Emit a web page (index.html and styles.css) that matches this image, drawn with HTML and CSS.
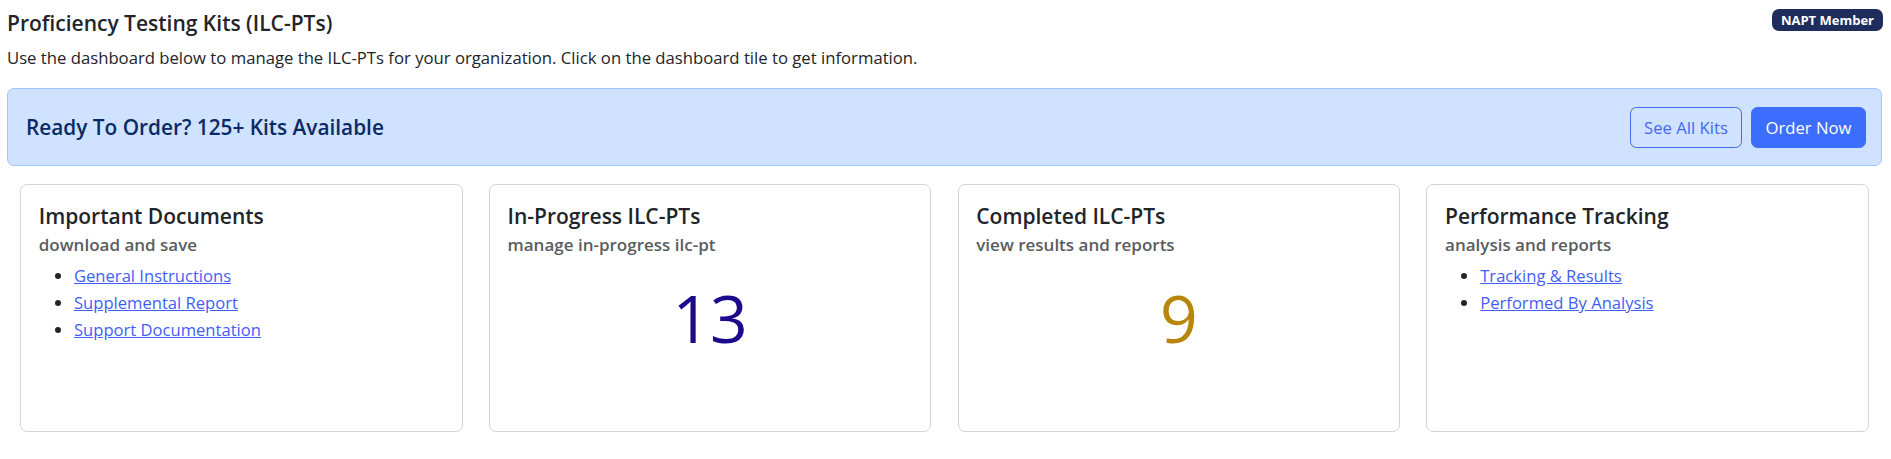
FILE: index.html
```html
<!DOCTYPE html>
<html lang="en">
<head>
<meta charset="utf-8">
<title>Proficiency Testing Kits (ILC-PTs)</title>
<link rel="stylesheet" href="styles.css">
</head>
<body>
<div class="page">
  <header class="page-head">
    <div class="page-intro">
      <h1 class="page-title">Proficiency Testing Kits (ILC-PTs)</h1>
      <p class="page-lead">Use the dashboard below to manage the ILC-PTs for your organization. Click on the dashboard tile to get information.</p>
    </div>
    <span class="member-badge">NAPT Member</span>
  </header>

  <section class="order-banner">
    <h2 class="order-title">Ready To Order? 125+ Kits Available</h2>
    <div class="order-actions">
      <a class="btn btn-outline" href="#">See All Kits</a>
      <a class="btn btn-solid" href="#">Order Now</a>
    </div>
  </section>

  <section class="tiles">
    <div class="tile-col">
      <div class="tile">
        <h3 class="tile-title">Important Documents</h3>
        <h4 class="tile-sub">download and save</h4>
        <ul class="tile-links">
          <li><a href="#">General Instructions</a></li>
          <li><a href="#">Supplemental Report</a></li>
          <li><a href="#">Support Documentation</a></li>
        </ul>
      </div>
    </div>
    <div class="tile-col">
      <div class="tile">
        <h3 class="tile-title">In-Progress ILC-PTs</h3>
        <h4 class="tile-sub">manage in-progress ilc-pt</h4>
        <div class="tile-count count-progress">13</div>
      </div>
    </div>
    <div class="tile-col">
      <div class="tile">
        <h3 class="tile-title">Completed ILC-PTs</h3>
        <h4 class="tile-sub">view results and reports</h4>
        <div class="tile-count count-done">9</div>
      </div>
    </div>
    <div class="tile-col">
      <div class="tile">
        <h3 class="tile-title">Performance Tracking</h3>
        <h4 class="tile-sub">analysis and reports</h4>
        <ul class="tile-links">
          <li><a href="#">Tracking &amp; Results</a></li>
          <li><a href="#">Performed By Analysis</a></li>
        </ul>
      </div>
    </div>
  </section>
</div>
</body>
</html>
```

FILE: styles.css
```css
* { box-sizing: border-box; }

html, body {
  margin: 0;
  padding: 0;
  background: #ffffff;
}

body {
  font-family: "Segoe UI", "Open Sans", "Noto Sans", sans-serif;
  font-size: 16.6px;
  line-height: 1.5;
  color: #212529;
}

.page {
  padding: 9.5px 9px 0 7px;
}

.page-head {
  display: flex;
  justify-content: space-between;
  align-items: flex-start;
}

.page-title {
  margin: 0 0 9.5px 0;
  font-size: 21px;
  font-weight: 600;
  line-height: 26px;
}

.page-lead {
  margin: 0 0 18px 0;
  font-size: 16.7px;
  line-height: 25px;
}

.member-badge {
  display: inline-block;
  margin-top: -0.5px;
  margin-right: -1px;
  background: #1f2d5c;
  color: #ffffff;
  font-size: 13px;
  font-weight: 700;
  line-height: 13px;
  padding: 4.5px 9px;
  border-radius: 7px;
}

.order-banner {
  display: flex;
  align-items: center;
  justify-content: space-between;
  background: #cfe2ff;
  border: 1px solid #9ec5fe;
  border-radius: 7px;
  padding: 17.5px 15px 17.5px 18px;
  margin-bottom: 18px;
}

.order-title {
  margin: 0;
  font-size: 20.8px;
  font-weight: 600;
  line-height: 1.2;
  color: #0a2a66;
}

.order-actions {
  display: flex;
  gap: 8.5px;
}

.btn {
  display: inline-block;
  font-size: 16.7px;
  line-height: 25px;
  padding: 7px 13.5px;
  border-radius: 6.5px;
  border: 1px solid transparent;
  text-decoration: none;
}

.btn-outline {
  color: #4468f0;
  border-color: #4468f0;
}

.btn-solid {
  color: #ffffff;
  background: #3d6dfd;
  border-color: #3d6dfd;
}

.tiles {
  display: grid;
  grid-template-columns: repeat(4, 1fr);
}

.tile-col {
  padding: 0 13.2px;
}

.tile {
  height: 248px;
  border: 1px solid #d4d4d4;
  border-radius: 7px;
  padding: 19px 17.6px 17.6px;
  background: #ffffff;
}

.tile-title {
  margin: 0 0 5.7px 0;
  font-size: 21px;
  font-weight: 600;
  line-height: 25.2px;
  color: #212529;
}

.tile-sub {
  margin: 0;
  font-size: 17px;
  font-weight: 600;
  line-height: 20px;
  color: #5a5d60;
}

.tile-links {
  margin: 8.4px 0 0 0;
  padding-left: 35.2px;
  font-size: 16.6px;
  line-height: 26.7px;
}

.tile-links a {
  color: #3f5ef8;
  text-decoration: underline;
}

.tile-count {
  margin-top: 29.2px;
  text-align: center;
  font-size: 66px;
  font-weight: 400;
  line-height: 66px;
}

.count-progress { color: #1c0a8c; }
.count-done { color: #b8860b; }
```
